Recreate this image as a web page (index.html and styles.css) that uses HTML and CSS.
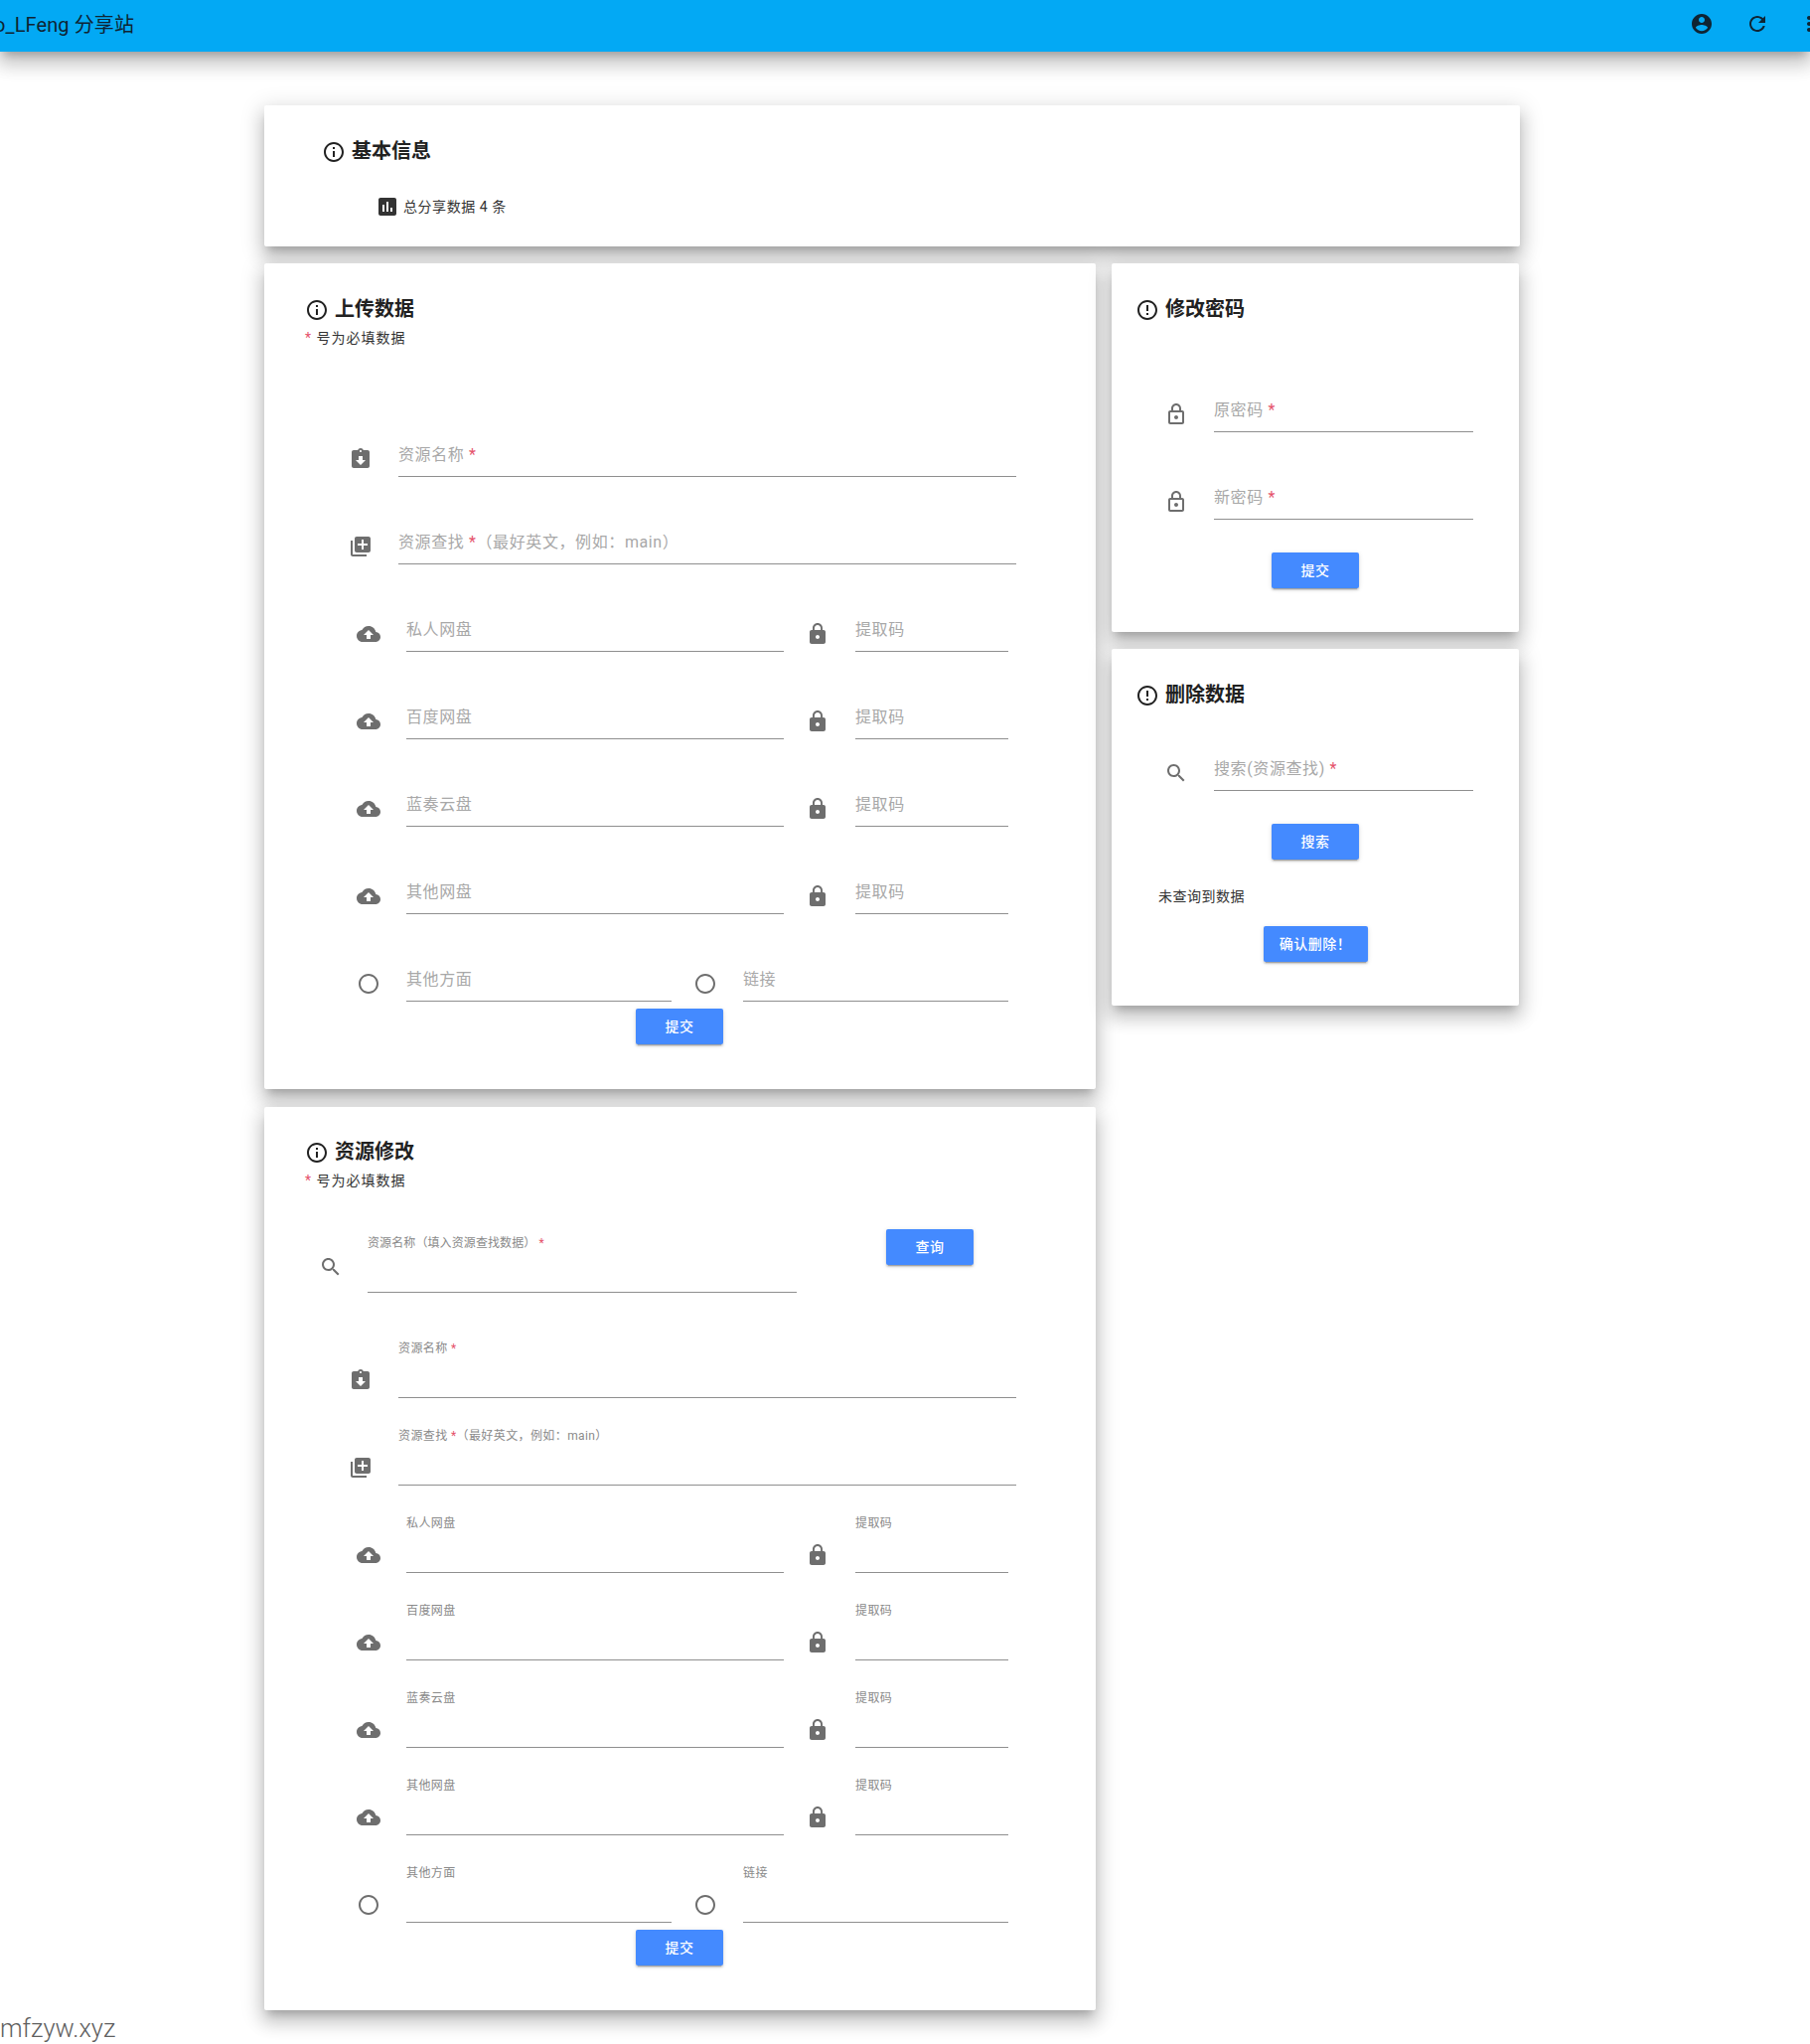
FILE: index.html
```html
<!DOCTYPE html>
<html lang="zh-CN">
<head>
<meta charset="utf-8">
<title>LFeng 分享站</title>
<link rel="stylesheet" href="styles.css">
</head>
<body>
<svg class="sprite" xmlns="http://www.w3.org/2000/svg">
  <symbol id="i-info" viewBox="0 0 24 24"><path d="M11 7h2v2h-2zm0 4h2v6h-2zm1-9C6.48 2 2 6.48 2 12s4.48 10 10 10 10-4.48 10-10S17.52 2 12 2zm0 18c-4.41 0-8-3.59-8-8s3.59-8 8-8 8 3.59 8 8-3.59 8-8 8z"/></symbol>
  <symbol id="i-error" viewBox="0 0 24 24"><path d="M11 15h2v2h-2zm0-8h2v6h-2zm.99-5C6.47 2 2 6.48 2 12s4.47 10 9.99 10C17.52 22 22 17.52 22 12S17.52 2 11.99 2zM12 20c-4.42 0-8-3.58-8-8s3.58-8 8-8 8 3.58 8 8-3.58 8-8 8z"/></symbol>
  <symbol id="i-chart" viewBox="0 0 24 24"><path d="M19 3H5c-1.1 0-2 .9-2 2v14c0 1.1.9 2 2 2h14c1.1 0 2-.9 2-2V5c0-1.1-.9-2-2-2zM9 17H7v-7h2v7zm4 0h-2V7h2v10zm4 0h-2v-4h2v4z"/></symbol>
  <symbol id="i-assign" viewBox="0 0 24 24"><path d="M19 3h-4.18C14.4 1.84 13.3 1 12 1c-1.3 0-2.4.84-2.82 2H5c-1.1 0-2 .9-2 2v14c0 1.1.9 2 2 2h14c1.1 0 2-.9 2-2V5c0-1.1-.9-2-2-2zm-7 0c.55 0 1 .45 1 1s-.45 1-1 1-1-.45-1-1 .45-1 1-1zm0 15l-5-5h3V9h4v4h3l-5 5z"/></symbol>
  <symbol id="i-library" viewBox="0 0 24 24"><path d="M4 6H2v14c0 1.1.9 2 2 2h14v-2H4V6zm16-4H8c-1.1 0-2 .9-2 2v12c0 1.1.9 2 2 2h12c1.1 0 2-.9 2-2V4c0-1.1-.9-2-2-2zm-1 9h-4v4h-2v-4H9V9h4V5h2v4h4v2z"/></symbol>
  <symbol id="i-cloud" viewBox="0 0 24 24"><path d="M19.35 10.04C18.67 6.59 15.64 4 12 4 9.11 4 6.6 5.64 5.35 8.04 2.34 8.36 0 10.91 0 14c0 3.31 2.69 6 6 6h13c2.76 0 5-2.24 5-5 0-2.64-2.05-4.78-4.65-4.96zM14 13v4h-4v-4H7l5-5 5 5h-3z"/></symbol>
  <symbol id="i-lock" viewBox="0 0 24 24"><path d="M18 8h-1V6c0-2.76-2.24-5-5-5S7 3.24 7 6v2H6c-1.1 0-2 .9-2 2v10c0 1.1.9 2 2 2h12c1.1 0 2-.9 2-2V10c0-1.1-.9-2-2-2zm-6 9c-1.1 0-2-.9-2-2s.9-2 2-2 2 .9 2 2-.9 2-2 2zm3.1-9H8.9V6c0-1.71 1.39-3.1 3.1-3.1 1.71 0 3.1 1.39 3.1 3.1v2z"/></symbol>
  <symbol id="i-lock-o" viewBox="0 0 24 24"><path d="M18 8h-1V6c0-2.76-2.24-5-5-5S7 3.24 7 6v2H6c-1.1 0-2 .9-2 2v10c0 1.1.9 2 2 2h12c1.1 0 2-.9 2-2V10c0-1.1-.9-2-2-2zM9 6c0-1.66 1.34-3 3-3s3 1.34 3 3v2H9V6zm9 14H6V10h12v10zm-6-3c1.1 0 2-.9 2-2s-.9-2-2-2-2 .9-2 2 .9 2 2 2z"/></symbol>
  <symbol id="i-search" viewBox="0 0 24 24"><path d="M15.5 14h-.79l-.28-.27C15.41 12.59 16 11.11 16 9.5 16 5.91 13.09 3 9.5 3S3 5.91 3 9.5 5.91 16 9.5 16c1.61 0 3.09-.59 4.23-1.57l.27.28v.79l5 4.99L20.49 19l-4.99-5zm-6 0C7.01 14 5 11.99 5 9.5S7.01 5 9.5 5 14 7.01 14 9.5 11.99 14 9.5 14z"/></symbol>
  <symbol id="i-account" viewBox="0 0 24 24"><path d="M12 2C6.48 2 2 6.48 2 12s4.48 10 10 10 10-4.48 10-10S17.52 2 12 2zm0 3c1.66 0 3 1.34 3 3s-1.34 3-3 3-3-1.34-3-3 1.34-3 3-3zm0 14.2c-2.5 0-4.71-1.28-6-3.22.03-1.99 4-3.08 6-3.08 1.99 0 5.97 1.09 6 3.08-1.29 1.94-3.5 3.22-6 3.22z"/></symbol>
  <symbol id="i-refresh" viewBox="0 0 24 24"><path d="M17.65 6.35C16.2 4.9 14.21 4 12 4c-4.42 0-7.99 3.58-7.99 8s3.57 8 7.99 8c3.73 0 6.84-2.55 7.73-6h-2.08c-.82 2.33-3.04 4-5.65 4-3.31 0-6-2.69-6-6s2.69-6 6-6c1.66 0 3.14.69 4.22 1.78L13 11h7V4l-2.35 2.35z"/></symbol>
  <symbol id="i-more" viewBox="0 0 24 24"><path d="M12 8c1.1 0 2-.9 2-2s-.9-2-2-2-2 .9-2 2 .9 2 2 2zm0 2c-1.1 0-2 .9-2 2s.9 2 2 2 2-.9 2-2-.9-2-2-2zm0 6c-1.1 0-2 .9-2 2s.9 2 2 2 2-.9 2-2-.9-2-2-2z"/></symbol>
  <symbol id="i-radio" viewBox="0 0 24 24"><path d="M12 2C6.48 2 2 6.48 2 12s4.48 10 10 10 10-4.48 10-10S17.52 2 12 2zm0 18c-4.42 0-8-3.58-8-8s3.58-8 8-8 8 3.58 8 8-3.58 8-8 8z"/></symbol>
</svg>

<header class="appbar">
  <span class="appbar-title">o_LFeng 分享站</span>
  <div class="appbar-actions">
    <svg class="icon"><use href="#i-account"/></svg>
    <svg class="icon"><use href="#i-refresh"/></svg>
    <svg class="icon icon-more"><use href="#i-more"/></svg>
  </div>
</header>

<main class="page">
  <section class="card card-basic">
    <h2 class="card-title"><svg class="icon"><use href="#i-info"/></svg>基本信息</h2>
    <p class="stat"><svg class="icon"><use href="#i-chart"/></svg>总分享数据 4 条</p>
  </section>

  <div class="columns">
    <div class="col-left">
      <section class="card card-wide card-upload">
        <h2 class="card-title"><svg class="icon"><use href="#i-info"/></svg>上传数据</h2>
        <p class="hint"><span class="star">*</span> 号为必填数据</p>
        <form class="rows rows-upload">
          <div class="row row-wide">
            <svg class="icon field-icon"><use href="#i-assign"/></svg>
            <label class="field"><span class="label">资源名称 <span class="star">*</span></span></label>
          </div>
          <div class="row row-wide">
            <svg class="icon field-icon"><use href="#i-library"/></svg>
            <label class="field"><span class="label">资源查找 <span class="star">*</span>（最好英文，例如：main）</span></label>
          </div>
          <div class="row row-net">
            <svg class="icon field-icon"><use href="#i-cloud"/></svg>
            <label class="field"><span class="label">私人网盘</span></label>
            <svg class="icon field-icon icon-code"><use href="#i-lock"/></svg>
            <label class="field field-code"><span class="label">提取码</span></label>
          </div>
          <div class="row row-net">
            <svg class="icon field-icon"><use href="#i-cloud"/></svg>
            <label class="field"><span class="label">百度网盘</span></label>
            <svg class="icon field-icon icon-code"><use href="#i-lock"/></svg>
            <label class="field field-code"><span class="label">提取码</span></label>
          </div>
          <div class="row row-net">
            <svg class="icon field-icon"><use href="#i-cloud"/></svg>
            <label class="field"><span class="label">蓝奏云盘</span></label>
            <svg class="icon field-icon icon-code"><use href="#i-lock"/></svg>
            <label class="field field-code"><span class="label">提取码</span></label>
          </div>
          <div class="row row-net">
            <svg class="icon field-icon"><use href="#i-cloud"/></svg>
            <label class="field"><span class="label">其他网盘</span></label>
            <svg class="icon field-icon icon-code"><use href="#i-lock"/></svg>
            <label class="field field-code"><span class="label">提取码</span></label>
          </div>
          <div class="row row-net">
            <svg class="icon field-icon"><use href="#i-radio"/></svg>
            <label class="field"><span class="label">其他方面</span></label>
            <svg class="icon field-icon icon-code"><use href="#i-radio"/></svg>
            <label class="field field-half"><span class="label">链接</span></label>
          </div>
        </form>
        <div class="actions actions-left actions-upload"><button class="btn" type="button">提交</button></div>
      </section>

      <section class="card card-wide card-modify">
        <h2 class="card-title"><svg class="icon"><use href="#i-info"/></svg>资源修改</h2>
        <p class="hint"><span class="star">*</span> 号为必填数据</p>
        <div class="row row-query">
          <svg class="icon field-icon icon-query"><use href="#i-search"/></svg>
          <label class="field field-float field-query"><span class="label">资源名称（填入资源查找数据） <span class="star">*</span></span></label>
          <button class="btn btn-query" type="button">查询</button>
        </div>
        <form class="rows">
          <div class="row row-wide">
            <svg class="icon field-icon"><use href="#i-assign"/></svg>
            <label class="field field-float"><span class="label">资源名称 <span class="star">*</span></span></label>
          </div>
          <div class="row row-wide">
            <svg class="icon field-icon"><use href="#i-library"/></svg>
            <label class="field field-float"><span class="label">资源查找 <span class="star">*</span>（最好英文，例如：main）</span></label>
          </div>
          <div class="row row-net">
            <svg class="icon field-icon"><use href="#i-cloud"/></svg>
            <label class="field field-float"><span class="label">私人网盘</span></label>
            <svg class="icon field-icon icon-code"><use href="#i-lock"/></svg>
            <label class="field field-float field-code"><span class="label">提取码</span></label>
          </div>
          <div class="row row-net">
            <svg class="icon field-icon"><use href="#i-cloud"/></svg>
            <label class="field field-float"><span class="label">百度网盘</span></label>
            <svg class="icon field-icon icon-code"><use href="#i-lock"/></svg>
            <label class="field field-float field-code"><span class="label">提取码</span></label>
          </div>
          <div class="row row-net">
            <svg class="icon field-icon"><use href="#i-cloud"/></svg>
            <label class="field field-float"><span class="label">蓝奏云盘</span></label>
            <svg class="icon field-icon icon-code"><use href="#i-lock"/></svg>
            <label class="field field-float field-code"><span class="label">提取码</span></label>
          </div>
          <div class="row row-net">
            <svg class="icon field-icon"><use href="#i-cloud"/></svg>
            <label class="field field-float"><span class="label">其他网盘</span></label>
            <svg class="icon field-icon icon-code"><use href="#i-lock"/></svg>
            <label class="field field-float field-code"><span class="label">提取码</span></label>
          </div>
          <div class="row row-net">
            <svg class="icon field-icon"><use href="#i-radio"/></svg>
            <label class="field field-float"><span class="label">其他方面</span></label>
            <svg class="icon field-icon icon-code"><use href="#i-radio"/></svg>
            <label class="field field-float field-half"><span class="label">链接</span></label>
          </div>
        </form>
        <div class="actions actions-left actions-modify"><button class="btn" type="button">提交</button></div>
      </section>
    </div>

    <div class="col-right">
      <section class="card card-side">
        <h2 class="card-title"><svg class="icon"><use href="#i-error"/></svg>修改密码</h2>
        <form class="rows rows-password">
          <div class="row row-side">
            <svg class="icon field-icon"><use href="#i-lock-o"/></svg>
            <label class="field"><span class="label">原密码 <span class="star">*</span></span></label>
          </div>
          <div class="row row-side">
            <svg class="icon field-icon"><use href="#i-lock-o"/></svg>
            <label class="field"><span class="label">新密码 <span class="star">*</span></span></label>
          </div>
        </form>
        <div class="actions actions-side"><button class="btn" type="button">提交</button></div>
      </section>

      <section class="card card-side">
        <h2 class="card-title"><svg class="icon"><use href="#i-error"/></svg>删除数据</h2>
        <form class="rows rows-delete">
          <div class="row row-side">
            <svg class="icon field-icon"><use href="#i-search"/></svg>
            <label class="field"><span class="label">搜索(资源查找) <span class="star">*</span></span></label>
          </div>
        </form>
        <div class="actions actions-side"><button class="btn" type="button">搜索</button></div>
        <p class="empty">未查询到数据</p>
        <div class="actions actions-confirm"><button class="btn btn-confirm" type="button">确认删除！</button></div>
      </section>
    </div>
  </div>
</main>

<footer class="footer">mfzyw.xyz</footer>
</body>
</html>
```
FILE: styles.css
```css
* { box-sizing: border-box; }

html, body {
  margin: 0;
  padding: 0;
  overflow-x: hidden;
}

body {
  background: #fff;
  color: #212121;
  font-family: Roboto, "Noto Sans CJK SC", sans-serif;
  font-size: 14px;
}

.sprite {
  display: none;
}

.icon {
  width: 24px;
  height: 24px;
  flex: none;
  fill: currentColor;
  display: block;
}

/* App bar */
.appbar {
  height: 52px;
  background: #03a9f4;
  color: #0f2433;
  display: flex;
  align-items: center;
  justify-content: space-between;
  padding-bottom: 5px;
  box-shadow: 0 7px 8px -4px rgba(0, 0, 0, .2), 0 12px 17px 2px rgba(0, 0, 0, .14), 0 5px 22px 4px rgba(0, 0, 0, .12);
}

.appbar-title {
  font-size: 20px;
  letter-spacing: .1px;
  margin-left: -6px;
  white-space: nowrap;
}

.appbar-actions {
  display: flex;
  gap: 32px;
  margin-right: -11px;
}

.icon-more {
  margin-left: -4px;
}

/* Layout */
.page {
  width: 1264px;
  margin: 54px 0 0 266px;
  display: flex;
  flex-direction: column;
  gap: 17px;
}

.columns {
  display: flex;
  gap: 16px;
  align-items: flex-start;
}

.col-left {
  width: 837px;
  display: flex;
  flex-direction: column;
  gap: 18px;
}

.col-right {
  width: 410px;
  display: flex;
  flex-direction: column;
  gap: 17px;
}

/* Cards */
.card {
  background: #fff;
  border-radius: 2px;
  box-shadow: 0 7px 8px -4px rgba(0, 0, 0, .2), 0 12px 17px 2px rgba(0, 0, 0, .14), 0 5px 22px 4px rgba(0, 0, 0, .12);
}

.card-basic {
  height: 142px;
  padding: 35px 0 0 58px;
}

.card-wide {
  padding-bottom: 45px;
}

.card-upload {
  padding-top: 35px;
}

.card-modify {
  padding-top: 34px;
}

.card-side {
  padding-top: 35px;
  padding-bottom: 44px;
}

.card-title {
  margin: 0;
  height: 24px;
  display: flex;
  align-items: flex-start;
  gap: 6px;
  font-size: 20px;
  font-weight: 700;
  line-height: 22px;
  color: #212121;
}

.card-wide .card-title {
  padding-left: 41px;
}

.card-side .card-title {
  padding-left: 24px;
}

.hint {
  margin: 6px 0 0 41px;
  font-size: 14px;
  line-height: 20px;
  letter-spacing: 1px;
  color: #333;
}

.star {
  color: #e5536b;
}

.stat {
  margin: 31px 0 0 54px;
  display: flex;
  align-items: center;
  gap: 4px;
  font-size: 14px;
  letter-spacing: .55px;
  line-height: 24px;
  color: #333;
}

/* Form rows */
.rows {
  display: flex;
  flex-direction: column;
  gap: 16px;
}

.rows-upload {
  margin-top: 58px;
}

.rows-password {
  margin-top: 39px;
}

.rows-delete {
  margin-top: 12px;
}

.row {
  height: 72px;
  display: flex;
  align-items: flex-end;
}

.row-wide {
  padding: 0 80px 0 85px;
}

.row-net {
  padding: 0 88px 0 93px;
}

.row-side {
  padding: 0 46px 0 53px;
}

.row-query {
  margin: 31px 0 34px;
  padding-left: 55px;
}

.field-icon {
  color: #6e6e6e;
  margin: 0 26px 6px 0;
}

.icon-code {
  margin-left: 22px;
  margin-right: 26px;
}

.icon-query {
  margin-right: 25px;
  margin-bottom: 14px;
}

.field {
  flex: 1;
  min-width: 0;
  height: 72px;
  display: flex;
  flex-direction: column;
  justify-content: flex-end;
  padding-bottom: 11px;
  border-bottom: 1px solid #8f8f8f;
}

.label {
  font-size: 16px;
  line-height: 20px;
  letter-spacing: .6px;
  color: #a8a8a8;
  white-space: nowrap;
}

.field-code {
  flex: none;
  width: 154px;
}

.field-half {
  flex: none;
  width: 267px;
}

.field-query {
  flex: none;
  width: 432px;
}

.field-float {
  justify-content: flex-start;
  padding: 15px 0 0;
}

.field-float .label {
  font-size: 12px;
  line-height: 14px;
  letter-spacing: .4px;
  color: #8a8a8a;
}

.field-query .label {
  letter-spacing: .1px;
}

/* Buttons */
.actions {
  display: flex;
  justify-content: center;
}

.actions-left {
  padding-right: 1px;
}

.actions-upload {
  margin-top: 7px;
}

.actions-modify {
  margin-top: 7px;
}

.actions-side {
  margin-top: 33px;
}

.actions-confirm {
  margin-top: 0;
}

.btn {
  height: 36px;
  min-width: 88px;
  padding: 0 16px 1px;
  border: 0;
  border-radius: 2px;
  background: #448aff;
  color: #fff;
  font: 500 14px/34px Roboto, "Noto Sans CJK SC", sans-serif;
  letter-spacing: .5px;
  box-shadow: 0 3px 1px -2px rgba(0, 0, 0, .2), 0 2px 2px 0 rgba(0, 0, 0, .14), 0 1px 5px 0 rgba(0, 0, 0, .12);
}

.btn-confirm {
  min-width: 105px;
}

.btn-query {
  align-self: flex-start;
  margin: 8px 0 0 90px;
}

.empty {
  margin: 27px 0 20px 47px;
  font-size: 14px;
  line-height: 20px;
  letter-spacing: .5px;
  color: #333;
}

/* Footer */
.footer {
  margin-top: 4px;
  font-size: 25.5px;
  font-weight: 300;
  line-height: 28px;
  color: #5f5f5f;
}
```
